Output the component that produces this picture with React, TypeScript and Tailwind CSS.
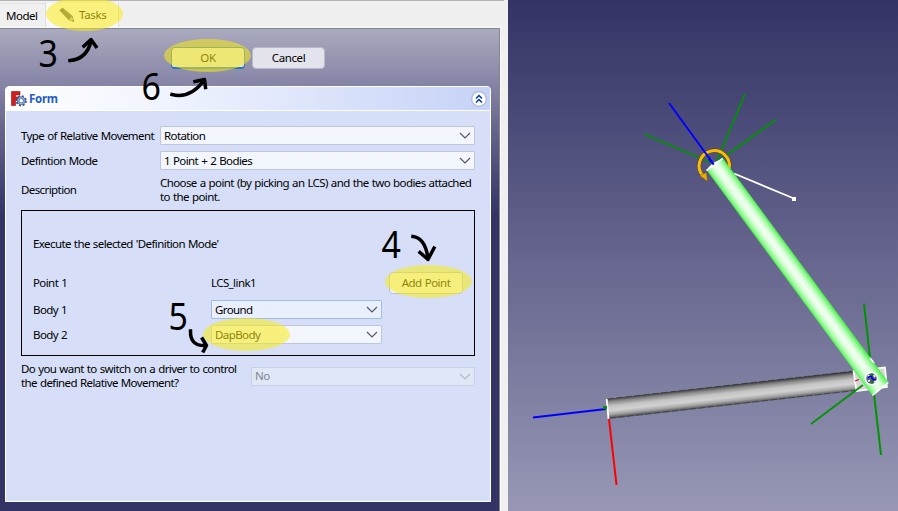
import type { ReactNode } from "react";

function Chevron({ muted = false }: { muted?: boolean }) {
  return (
    <svg width="12" height="7" viewBox="0 0 12 7" className="shrink-0" fill="none">
      <path d="M1 1L6 6L11 1" stroke={muted ? "#b4b8c4" : "#55585f"} strokeWidth="1.2" />
    </svg>
  );
}

function Combo({ children, className, muted }: { children: ReactNode; className: string; muted?: boolean }) {
  return (
    <div className={`flex h-[19px] min-w-0 items-center justify-between rounded-[1px] border pr-[3px] pl-[3px] ${className}`}>
      <span>{children}</span>
      <Chevron muted={muted} />
    </div>
  );
}

function Highlight({ className }: { className: string }) {
  return <div className={`absolute rounded-[50%] bg-[rgb(250,235,20)]/55 ${className}`} />;
}

function Digit({ children, className }: { children: string; className: string }) {
  return (
    <div className={`absolute scale-x-[0.87] text-[39px] leading-[40px] tracking-normal ${className}`}>{children}</div>
  );
}

function FormIcon() {
  return (
    <svg width="16" height="16" viewBox="0 0 16 16" className="shrink-0">
      <path d="M0.5 0.5H9V4H4.5V6H7.5V9.5H4.5V14.5H0.5Z" fill="#d41c1c" stroke="#8e1010" strokeWidth="0.6" />
      <circle cx="10.2" cy="9.8" r="4.6" fill="none" stroke="#3c5a86" strokeWidth="2" strokeDasharray="2 1.61" />
      <circle cx="10.2" cy="9.8" r="3" fill="none" stroke="#3c5a86" strokeWidth="2.6" />
      <circle cx="10.2" cy="9.8" r="3" fill="none" stroke="#8aa8d2" strokeWidth="1.4" />
      <circle cx="10.2" cy="9.8" r="1.6" fill="#f3f6ff" />
    </svg>
  );
}

function Pencil() {
  return (
    <svg width="16" height="16" viewBox="0 0 16 16" className="shrink-0">
      <path d="M0.5 3.5L3.5 0.5L13.5 9L15 14.8L9.5 13Z" fill="#555753" />
      <path d="M2.5 4.5L11 12.5M4.5 2.8L12.8 10.5" stroke="#888a85" strokeWidth="0.8" />
      <path d="M10 12.5L13 9.8L14.2 13.8Z" fill="#c4c4b8" />
      <path d="M13.2 14.2L14.4 12.8L15 14.8Z" fill="#222" />
    </svg>
  );
}

function Viewport() {
  return (
    <svg width="390" height="511" viewBox="508 0 390 511" className="block">
      <defs>
        <linearGradient id="sky" x1="0" y1="0" x2="0" y2="1">
          <stop offset="0" stopColor="#333366" />
          <stop offset="1" stopColor="#9797b5" />
        </linearGradient>
        <linearGradient id="green" gradientUnits="userSpaceOnUse" x1="707.1" y1="170.3" x2="722.9" y2="158.7">
          <stop offset="0" stopColor="#5cf25c" />
          <stop offset="0.14" stopColor="#9afa9a" />
          <stop offset="0.34" stopColor="#dcffdc" />
          <stop offset="0.5" stopColor="#efffef" />
          <stop offset="0.68" stopColor="#dcffdc" />
          <stop offset="0.86" stopColor="#9afa9a" />
          <stop offset="1" stopColor="#5cf25c" />
        </linearGradient>
        <linearGradient id="gray" gradientUnits="userSpaceOnUse" x1="700" y1="388.5" x2="702.2" y2="408.5">
          <stop offset="0" stopColor="#3c3c3c" />
          <stop offset="0.15" stopColor="#858585" />
          <stop offset="0.38" stopColor="#c4c4c4" />
          <stop offset="0.6" stopColor="#d2d2d2" />
          <stop offset="0.8" stopColor="#a2a2a2" />
          <stop offset="1" stopColor="#404040" />
        </linearGradient>
      </defs>
      <rect x="508" width="390" height="511" fill="url(#sky)" />
      <g strokeWidth="1.8" fill="none">
        <path d="M644 134L714 164M745 94L716 163M776 119.500L716 163" stroke="#009400" />
        <path d="M734 173.500L794 198.500" stroke="#fff" />
        <path d="M864 303.500L870 358M874 394L881 455" stroke="#009400" strokeWidth="2" />
      </g>
      <rect x="792" y="197" width="4" height="4" fill="#fff" />

      <path d="M607 399L854 371L856 390.500L609 418.500Z" fill="url(#gray)" />
      <path d="M607 399L854 371M609 418.500L856 390.500" stroke="#222" strokeWidth="0.500" strokeDasharray="7 2" />
      <path d="M606.700 399L608.500 419" stroke="#fff" strokeWidth="1.8" />
      <path d="M533 417.500L606 409" stroke="#0000ff" strokeWidth="2" />
      <rect x="603" y="406" width="4" height="3" fill="#009400" />
      <path d="M609 419L616.500 485" stroke="#ff0000" strokeWidth="2" />

      <path d="M853.500 371L885 367.500L887 387L856.500 391Z" fill="#d5d5d5" stroke="#fff" strokeWidth="1.6" />
      <path d="M855 381L859 379.500" stroke="#e00000" strokeWidth="1.2" />
      <path d="M863 385L811 424" stroke="#009400" strokeWidth="1.7" />

      <path d="M703 176A15.200 15.200 0 1 1 729.300 168.500" fill="none" stroke="#61420a" strokeWidth="4" />
      <path d="M703 176A15.200 15.200 0 1 1 729.300 168.500" fill="none" stroke="#f7bd08" strokeWidth="3" />
      <path d="M699.500 175.500L706.500 172.500L707.500 181.500Z" fill="#e5ac08" stroke="#725008" strokeWidth="0.500" />

      <path d="M669 103L713.500 164" stroke="#0000ff" strokeWidth="2" />
      <path d="M707.200 170.500L713 163L722.700 158.500L888.300 382.500L872.500 395.300Z" fill="url(#green)" />
      <path d="M707.200 170.500L872.500 395.300M722.700 158.500L888.300 382.500" stroke="#4af04a" strokeWidth="0.700" />
      <path d="M706.500 170.500L722.700 158.300M888.300 382.500L872.500 395.300M870 358L874 363" stroke="#fff" strokeWidth="1.600" />
      <path d="M716 166L867 370" stroke="#fff" strokeWidth="0.900" />
      <path d="M708 168L713 163L720 160L714 167Z" fill="#fff" />
      <path d="M709 159L713.800 164.500" stroke="#0000ff" strokeWidth="2" />
      <circle cx="871.500" cy="378.500" r="6.800" fill="#fff" />
      <circle cx="871.500" cy="378.500" r="5.200" fill="#59597f" />
      <path d="M868 375.500L870.500 377M874.500 382.500L876 380M868 381L870 380.500M874 375L875 377" stroke="#fff" strokeWidth="1.800" />
      <path d="M868 377.500L871 376L873 379.500L876 380" fill="none" stroke="#0000dd" strokeWidth="1.600" />
      <path d="M872 373.500V376M872 380.500V383.500" stroke="#008800" strokeWidth="2" />
    </svg>
  );
}

function Arrows() {
  return (
    <svg width="508" height="400" viewBox="0 0 508 400" className="absolute top-0 left-0" fill="none" stroke="#000" strokeWidth="3.500" strokeLinecap="square" strokeLinejoin="round">
      <path d="M70 60.500Q87 59 91 41M84 46L91 39.500L96 46.500" />
      <path d="M172 94.500Q190 99 203.500 81M195 81.500L204.500 79.500L205.500 87.500" />
      <path d="M413 236.500Q425 238 428 258M420 252.500L428 259.500L434 248" />
      <path d="M190.500 331Q190 346 205 345.500M202.500 339L206.500 345.500L203.500 351" />
    </svg>
  );
}

export default function App() {
  return (
    <div className="relative flex h-[511px] w-[898px] overflow-hidden bg-[#f0f0f0] font-['Noto_Sans',sans-serif] text-[11.5px] leading-[14px] tracking-[-0.59px] whitespace-nowrap text-black [word-spacing:0.6px]">
      <div className="flex w-[508px] shrink-0 flex-col">
        <div className="mr-[4px] flex h-[27px] items-stretch border-t border-[#b4b4b4]">
          <div className="mt-[2px] flex w-[45px] items-center border-t border-[#e2e2e2] pl-[6px] tracking-[-0.5px]">Model</div>
          <div className="mt-[2px] flex w-[74px] items-center gap-[4px] border-x border-[#dedede] bg-[#f8f8f8] pl-[13px] tracking-[-0.3px]">
            <Pencil />
            <span>Tasks</span>
          </div>
        </div>
        <div className="mr-[7px] flex h-[484px] flex-col border-t border-r border-[#fafafa]">
          <div className="flex grow flex-col border-t border-r border-[#85858f] bg-[linear-gradient(#aaaabf_0px,#8583a5_57px,#66658c_100px,#333366_187px)] pt-[18px] pr-[8px] pl-[5px]">
            <div className="flex gap-[7px] pl-[166px] tracking-[-0.4px]">
              <div className="flex h-[22px] w-[74px] items-center justify-center rounded-[4px] border border-b-[2px] border-[#2878b8] bg-[#e2e3eb]">OK</div>
              <div className="flex h-[22px] w-[73px] items-center justify-center rounded-[4px] border border-[#b9b9cb] bg-[#e2e3eb]">Cancel</div>
            </div>
            <div className="mt-[17px] flex h-[416px] flex-col rounded-t-[4px] border border-white bg-[#d6dff7]">
              <div className="flex h-[24px] shrink-0 items-center rounded-t-[3px] border-b border-white bg-[linear-gradient(90deg,#ffffff,#f3f6ff_28%,#c6d3f7)] pr-[3px] pl-[5px]">
                <FormIcon />
                <span className="ml-[2px] grow font-bold tracking-[-0.3px] text-[#215dc6]">Form</span>
                <svg width="16" height="16" viewBox="0 0 16 16">
                  <circle cx="8" cy="8" r="7.300" fill="#fff" stroke="#adb7d5" strokeWidth="1.200" />
                  <path d="M5 7.500L8 4.500L11 7.500M5 11.500L8 8.500L11 11.500" stroke="#003c9e" strokeWidth="1.500" fill="none" />
                </svg>
              </div>
              <div className="flex flex-col pt-[15px] pr-[15px] pl-[15px]">
                <div className="grid grid-cols-[139px_315px] items-center gap-y-[6px]">
                  <span>Type of Relative Movement</span>
                  <Combo className="border-[#bcc6df] bg-[#f3f6fd]">Rotation</Combo>
                  <span>Defintion Mode</span>
                  <Combo className="border-[#bcc6df] bg-[#f3f6fd]">1 Point + 2 Bodies</Combo>
                  <span>Description</span>
                  <span>Choose a point (by picking an LCS) and the two bodies attached<br />to the point.</span>
                </div>
                <div className="mt-[6px] flex h-[146px] flex-col border border-black px-[11px] pt-[26px]">
                  <span>Execute the selected 'Definition Mode'</span>
                  <div className="mt-[21px] grid grid-cols-[178px_171px_1fr] items-center gap-y-[6px]">
                    <span>Point 1</span>
                    <span>LCS_link1</span>
                    <div className="ml-[7px] flex h-[22px] w-[74px] items-center justify-center rounded-[4px] border border-[#b9bfcf] bg-[#f2f4fb] tracking-[-0.5px]">Add Point</div>
                    <span>Body 1</span>
                    <Combo className="border-[#9fbde2] bg-[#e9effc]">Ground</Combo>
                    <span />
                    <span>Body 2</span>
                    <Combo className="border-[#bcc6df] bg-[#f3f6fd]">DapBody</Combo>
                  </div>
                </div>
                <div className="mt-[6px] flex items-center">
                  <span className="w-[230px]">Do you want to switch on a driver to control<br />the defined Relative Movement?</span>
                  <div className="grow">
                    <Combo muted className="border-[#c9d1e5] bg-[#e0e7f6] text-[#808593]">No</Combo>
                  </div>
                </div>
              </div>
            </div>
          </div>
        </div>
      </div>
      <Viewport />
      <Highlight className="top-[-3px] left-[46px] h-[34px] w-[77px]" />
      <Highlight className="top-[39px] left-[164px] h-[33px] w-[87px]" />
      <Highlight className="top-[265px] left-[385px] h-[33px] w-[87px]" />
      <Highlight className="top-[318px] left-[203px] h-[33px] w-[87px]" />
      <Arrows />
      <Digit className="top-[32px] left-[37px]">3</Digit>
      <Digit className="top-[65px] left-[140px]">6</Digit>
      <Digit className="top-[223px] left-[380px]">4</Digit>
      <Digit className="top-[295px] left-[167px]">5</Digit>
    </div>
  );
}
